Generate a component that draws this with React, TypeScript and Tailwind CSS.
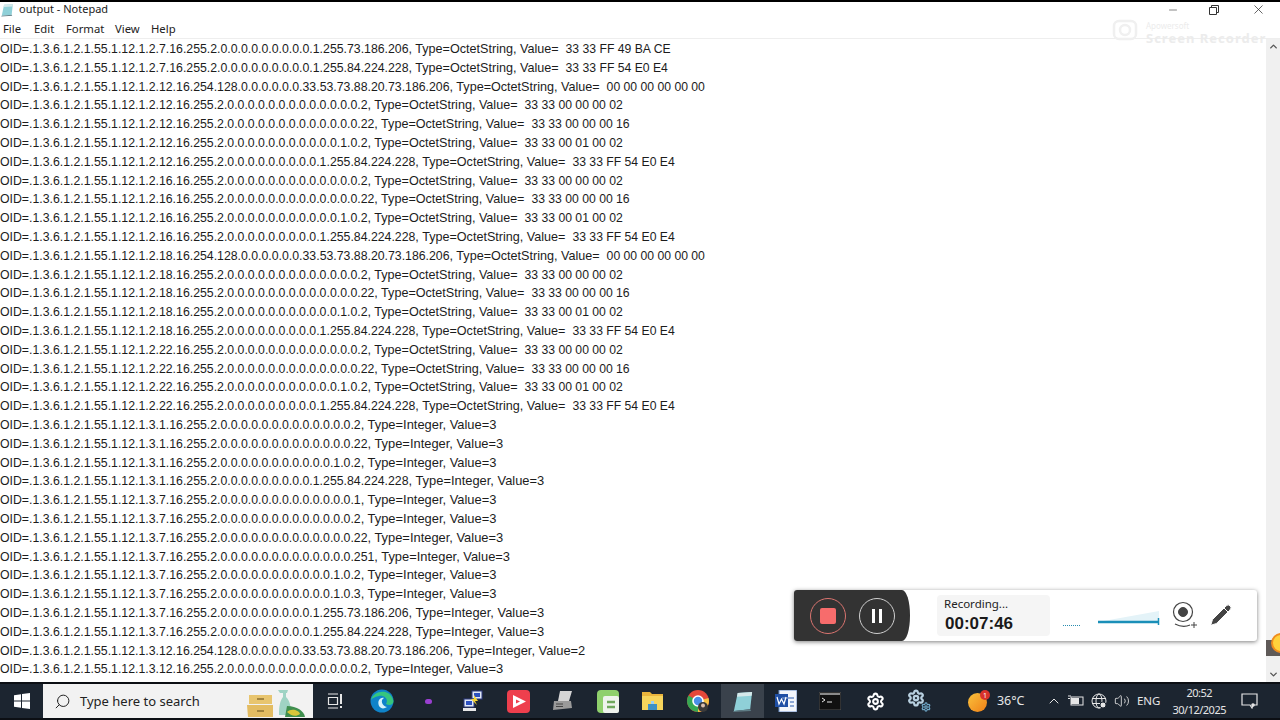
import type { ReactNode } from 'react'
import { ChevronDown, ChevronUp, Minus, Pencil, Search, Settings, Volume2, X } from 'lucide-react'

const prefix = 'OID=.1.3.6.1.2.1.55.1.12.1.'
const zeros = (n: number) => Array(n).fill('0').join('.')

const allNodes2 = `16.255.2.${zeros(13)}.2`
const allNodes22 = `16.255.2.${zeros(13)}.22`
const dhcp = `16.255.2.${zeros(11)}.1.0.2`
const sol84 = `16.255.2.${zeros(9)}.1.255.84.224.228`
const sol73 = `16.255.2.${zeros(9)}.1.255.73.186.206`
const linkLocal = '16.254.128.0.0.0.0.0.0.33.53.73.88.20.73.186.206'

type Line = { oid: string; type: string; value: string }

const oct = (id: string, value: string): Line => ({ oid: `${prefix}${id}`, type: ', Type=OctetString, Value=  ', value })
const int = (id: string, value = 3): Line => ({ oid: `${prefix}${id}`, type: ', Type=Integer, Value=', value: String(value) })

function ifaceRows(n: string, withLink: boolean) {
  const rows = [
    oct(`2.${n}.${allNodes2}`, '33 33 00 00 00 02'),
    oct(`2.${n}.${allNodes22}`, '33 33 00 00 00 16'),
    oct(`2.${n}.${dhcp}`, '33 33 00 01 00 02'),
    oct(`2.${n}.${sol84}`, '33 33 FF 54 E0 E4'),
  ]
  return withLink ? [oct(`2.${n}.${linkLocal}`, '00 00 00 00 00 00'), ...rows] : rows
}

const lines = [
  oct(`2.7.${sol73}`, '33 33 FF 49 BA CE'),
  oct(`2.7.${sol84}`, '33 33 FF 54 E0 E4'),
  ...ifaceRows('12', true),
  ...ifaceRows('16', false),
  ...ifaceRows('18', true),
  ...ifaceRows('22', false),
  int(`3.1.${allNodes2}`),
  int(`3.1.${allNodes22}`),
  int(`3.1.${dhcp}`),
  int(`3.1.${sol84}`),
  int(`3.7.16.255.2.${zeros(13)}.1`),
  int(`3.7.${allNodes2}`),
  int(`3.7.${allNodes22}`),
  int(`3.7.16.255.2.${zeros(13)}.251`),
  int(`3.7.${dhcp}`),
  int(`3.7.16.255.2.${zeros(11)}.1.0.3`),
  int(`3.7.${sol73}`),
  int(`3.7.${sol84}`),
  int(`3.12.${linkLocal}`, 2),
  int(`3.12.${allNodes2}`),
]

function NotepadIcon({ size = 16 }: { size?: number }) {
  return (
    <svg width={size} height={size} viewBox="0 0 24 24">
      <path d="M7 3 L22 2 L20 20 L3 22 Z" fill="#8fd0d8" />
      <path d="M7 3 L22 2 L21.6 6 L6.2 7 Z" fill="#d5e8ea" />
      <path d="M20 20 L3 22 L2 23 L21 22 Z" fill="#5f7d86" />
    </svg>
  )
}

function TitleBar() {
  return (
    <div className="flex h-[15px] items-center bg-white text-[11px] text-[#1a1a1a]">
      <div className="w-[19px]">
        <NotepadIcon size={14} />
      </div>
      <span>output - Notepad</span>
      <div className="ml-auto flex items-center text-[#333]">
        <Minus size={12} strokeWidth={1.2} className="mr-[29px]" />
        <svg width="12" height="12" viewBox="0 0 12 12" className="mr-[31px]" fill="none" stroke="#333">
          <path d="M1.5 3.5 H8.5 V10.5 H1.5 Z M3.5 3.5 V1.5 H10.5 V8.5 H8.5" />
        </svg>
        <X size={15} strokeWidth={1.2} className="mr-[14px]" />
      </div>
    </div>
  )
}

function MenuBar() {
  return (
    <div className="flex h-[22px] items-center border-b border-[#eeeeee] bg-white pl-[3px] pt-[3px] text-[11.3px] text-[#222]">
      <span className="w-[31px]">File</span>
      <span className="w-[32px]">Edit</span>
      <span className="w-[49px]">Format</span>
      <span className="w-[36px]">View</span>
      <span>Help</span>
    </div>
  )
}

function Watermark() {
  return (
    <div className="pointer-events-none absolute left-[1112px] top-[19px] flex items-center gap-[8px]">
      <svg width="26" height="28" viewBox="0 0 26 28" fill="none" stroke="#f0f0f0" strokeWidth="2.5">
        <rect x="2" y="2" width="22" height="18" rx="5" />
        <circle cx="13" cy="11" r="5" />
      </svg>
      <div className="flex flex-col text-[#ececec]">
        <span className="text-[8px] leading-[10px]">Apowersoft</span>
        <span className="text-[13px] font-bold leading-[14px] tracking-[1px]">Screen Recorder</span>
      </div>
    </div>
  )
}

function Scrollbar() {
  return (
    <div className="relative flex w-[14px] flex-col items-center justify-between bg-[#f0f0f0] py-[2px] text-[#555]">
      <ChevronUp size={11} strokeWidth={3} />
      <ChevronDown size={11} strokeWidth={3} />
      <div className="absolute left-0 top-[601px] h-[16px] w-full bg-[#5f5a58]" />
      <div className="absolute left-[5px] top-[594px] h-[20px] w-[20px] rounded-full border-2 border-[#f08c1e] bg-[#ffd23c]" />
    </div>
  )
}

function Recorder() {
  return (
    <div className="absolute left-[794px] top-[590px] flex h-[51px] w-[463px] rounded-[3px] bg-white shadow-[0_1px_4px_rgba(0,0,0,0.5)]">
      <div className="flex w-[116px] items-center gap-[13px] rounded-l-[3px] rounded-r-[8px_25px] bg-[#333333] pl-[16px]">
        <div className="flex h-[36px] w-[36px] items-center justify-center rounded-full border border-[#d9746f]">
          <div className="h-[16px] w-[16px] rounded-[2px] bg-[#f76c6c]" />
        </div>
        <div className="flex h-[36px] w-[36px] items-center justify-center gap-[4px] rounded-full border border-[#cfcfcf]">
          <div className="h-[14px] w-[3px] bg-white" />
          <div className="h-[14px] w-[3px] bg-white" />
        </div>
      </div>
      <div className="ml-[27px] mt-[5px] h-[41px] w-[113px] rounded-[4px] bg-[#f5f5f5] pl-[7px]">
        <div className="text-[11.5px] leading-[18px] text-[#222]">Recording...</div>
        <div className="pl-[1px] font-['Liberation_Sans',sans-serif] text-[17px] font-bold leading-[21px] text-[#1a1a1a]">00:07:46</div>
      </div>
      <div className="ml-[13px] mt-[35px] h-0 w-[17px] border-t border-dotted border-[#2a8db0]" />
      <svg width="64" height="20" viewBox="0 0 64 20" className="ml-[17px] mt-[20px]">
        <path d="M1 12 L62 1 L62 12 Z" fill="#e4f3f8" />
        <path d="M1 12 H61" stroke="#1a8fb8" strokeWidth="2.5" />
        <path d="M61.5 8 V15" stroke="#1a8fb8" strokeWidth="1.5" />
      </svg>
      <svg width="26" height="28" viewBox="0 0 26 28" className="ml-[11px] mt-[11px]" fill="none" stroke="#444">
        <circle cx="11" cy="11" r="9.5" strokeWidth="1.2" />
        <circle cx="11" cy="11" r="4.5" fill="#444" />
        <path d="M3 23 Q11 27 18 24" strokeWidth="1.2" />
        <path d="M19 24 H25 M22 21 V27" strokeWidth="1" />
      </svg>
      <Pencil size={24} fill="#444" stroke="#fff" strokeWidth={1} className="ml-[11px] mt-[13px]" />
    </div>
  )
}

function EdgeIcon() {
  return (
    <svg width="24" height="24" viewBox="0 0 24 24">
      <circle cx="12" cy="12" r="11.5" fill="#0f83c9" />
      <path d="M1 11 C3 2 20 -2 23.5 12 C23.5 16 19 17 16 15 C19 10 14 6 9 7 C5 8 2 9 1 11 Z" fill="#36c57d" />
      <path d="M9 17 C7 12 10 8 14 9 C10 11 12 17 17 18 C14 20 11 20 9 17 Z" fill="#d8f3fb" />
    </svg>
  )
}

function ChromeIcon() {
  return (
    <svg width="24" height="24" viewBox="0 0 24 24">
      <circle cx="12" cy="12" r="11" fill="#e5483a" />
      <path d="M12 12 L22.5 9 A11 11 0 0 1 12 23 Z" fill="#f6c445" />
      <path d="M12 12 L12 23 A11 11 0 0 1 2.5 6.5 Z" fill="#35a853" />
      <circle cx="12" cy="12" r="5" fill="#4a8fe8" stroke="#fff" strokeWidth="1.6" />
      <circle cx="17" cy="18" r="5" fill="#3a3a3a" />
      <circle cx="17" cy="16.5" r="2" fill="#d8c0b0" />
    </svg>
  )
}

function Gears() {
  return (
    <div className="relative h-[24px] w-[24px] text-[#b8d0e0]">
      <Settings size={18} strokeWidth={3} className="absolute left-0 top-0" />
      <Settings size={10} strokeWidth={3} className="absolute bottom-[1px] right-0 text-[#6fa7c7]" />
    </div>
  )
}

function TaskIcon({ width = 44, active, children }: { width?: number; active?: boolean; children: ReactNode }) {
  return (
    <div
      className={`flex h-full items-center justify-center ${active ? 'bg-[#3a424c]' : ''}`}
      style={{ width }}
    >
      {children}
    </div>
  )
}

function Taskbar() {
  return (
    <div className="flex h-[38px] items-stretch border-y-2 border-[#0c0f14] bg-[#1c2530]">
      <div className="flex w-[43px] items-center justify-center">
        <svg width="16" height="16" viewBox="0 0 16 16" fill="#fff">
          <path d="M0 2.2 L7 1.2 V7.5 H0 Z M8 1 L16 0 V7.5 H8 Z M0 8.5 H7 V14.8 L0 13.8 Z M8 8.5 H16 V16 L8 15 Z" />
        </svg>
      </div>
      <div className="flex w-[270px] items-center bg-[#f2f2f2] pl-[11px] text-[13px] text-[#222]">
        <Search size={17} strokeWidth={1.4} className="-scale-x-100" />
        <span className="ml-[9px] pt-[1px]">Type here to search</span>
        <svg width="66" height="34" viewBox="0 0 66 34" className="ml-[47px] shrink-0">
          <path d="M2 11 H25 V20 H2 Z" fill="#e8c56f" />
          <path d="M0 21 H26 V33 H1 Z" fill="#e3bc62" />
          <path d="M10 15 H17 M10 27 H17" stroke="#8b6f30" strokeWidth="1.5" />
          <path d="M31 6 H41 L40 9 H39 V13 C43 17 44 22 44 31 H32 C32 22 33 17 36 13 V9 H33 Z" fill="#9fd3c4" />
          <path d="M40 22 C50 22 57 27 58 33 H38 Z" fill="#3f8f4f" />
          <path d="M40 28 C44 24 52 26 53 30 C49 33 44 32 40 28 Z" fill="#d9c63a" />
        </svg>
      </div>

      <TaskIcon>
        <svg width="16" height="16" viewBox="0 0 16 16" fill="none" stroke="#e6e6e6" strokeWidth="1.2">
          <path d="M1 1 H11 M1 15 H11" />
          <path d="M1.5 4.5 H10.5 V11.5 H1.5 Z" />
          <path d="M14 1 V11 M14 13 V15" strokeWidth="2" />
        </svg>
      </TaskIcon>
      <TaskIcon width={50}><EdgeIcon /></TaskIcon>
      <TaskIcon width={42}><div className="h-[5px] w-[7px] rounded-full bg-[#9a3fd0]" /></TaskIcon>
      <TaskIcon width={48}>
        <svg width="24" height="24" viewBox="0 0 24 24">
          <rect x="11" y="2" width="10" height="8" fill="#dfe7f5" stroke="#2c3a80" />
          <rect x="13" y="4" width="6" height="4" fill="#2c50c0" />
          <rect x="3" y="10" width="10" height="8" fill="#dfe7f5" stroke="#2c3a80" />
          <rect x="5" y="12" width="6" height="4" fill="#2c50c0" />
          <path d="M13 6 L17 12 H14 L16 16 L10 10 H13 Z" fill="#f5d432" />
          <rect x="2" y="19" width="13" height="3" fill="#e8e8e8" />
        </svg>
      </TaskIcon>
      <TaskIcon width={42}>
        <svg width="23" height="23" viewBox="0 0 23 23">
          <rect width="23" height="23" rx="4" fill="#ee3f4d" />
          <path d="M6 5 L19 11.5 L6 18 Z M9 9.5 V13.5 L13 11.5 Z" fill="#fff" fillRule="evenodd" />
        </svg>
      </TaskIcon>
      <TaskIcon width={46}>
        <svg width="22" height="22" viewBox="0 0 22 22">
          <path d="M9 1 H21 L18 11 H7 Z" fill="#d5d5d5" />
          <path d="M3 11 H20 L21 18 L2 20 Z" fill="#9a9a9a" />
          <path d="M5 14 H12 M5 16.5 H12" stroke="#444" />
        </svg>
      </TaskIcon>
      <TaskIcon width={46}>
        <svg width="22" height="23" viewBox="0 0 22 23">
          <rect width="22" height="23" rx="4" fill="#8fd06c" />
          <rect x="6" y="6" width="16" height="17" rx="2" fill="#eef3ec" />
          <path d="M10 12 H18 M10 17 H18" stroke="#6fa85c" strokeWidth="2.5" />
        </svg>
      </TaskIcon>
      <TaskIcon width={44}>
        <svg width="22" height="20" viewBox="0 0 22 20">
          <path d="M0 1 H8 L10 3 H21 V6 H0 Z" fill="#e9b43c" />
          <rect y="5" width="21" height="14" fill="#f6d45c" />
          <rect x="6" y="13" width="9" height="6" fill="#3f8fc4" />
          <rect x="9" y="10" width="3" height="3" fill="#9fd0f0" />
        </svg>
      </TaskIcon>
      <TaskIcon width={46}><ChromeIcon /></TaskIcon>
      <TaskIcon width={43} active><NotepadIcon size={23} /></TaskIcon>
      <TaskIcon>
        <svg width="22" height="22" viewBox="0 0 22 22">
          <rect x="4" y="0" width="18" height="22" fill="#f3f6fb" stroke="#6d8fc7" />
          <rect x="0" y="4" width="13" height="13" fill="#1f4fa5" />
          <path d="M7 8 H19 M15 12 H19 M15 16 H19" stroke="#6d8fc7" strokeWidth="1.5" />
          <path d="M2 7 L4 14 L6.5 9 L9 14 L11 7" stroke="#fff" fill="none" strokeWidth="1.2" />
        </svg>
      </TaskIcon>
      <TaskIcon>
        <svg width="22" height="18" viewBox="0 0 22 18">
          <rect width="22" height="18" fill="#111" stroke="#555" />
          <rect x="1" y="1" width="20" height="2" fill="#8a8a8a" />
          <path d="M3 6 L6 8 L3 10 M8 10 H13" stroke="#e8e8e8" fill="none" />
        </svg>
      </TaskIcon>
      <TaskIcon width={46}><Settings size={19} strokeWidth={2.6} className="text-white" /></TaskIcon>
      <TaskIcon width={42}><Gears /></TaskIcon>

      <div className="ml-auto flex items-center text-[#e6e6e6]">
        <div className="relative h-[22px] w-[22px]">
          <div className="absolute bottom-0 left-0 h-[19px] w-[19px] rounded-full bg-gradient-to-br from-[#f9c23c] to-[#ee7f15]" />
          <div className="absolute right-0 top-0 flex h-[10px] w-[10px] items-center justify-center rounded-full bg-[#d8322b] text-[7px] leading-none text-white">1</div>
        </div>
        <span className="ml-[7px] w-[49px] text-[12.5px]">36°C</span>
        <ChevronUp size={16} strokeWidth={1.5} />
        <svg width="16" height="12" viewBox="0 0 16 12" className="ml-[6px]">
          <rect x="3" y="2" width="12" height="8" fill="none" stroke="#e6e6e6" />
          <rect x="3" y="3" width="8" height="6" fill="#e6e6e6" />
          <path d="M0 1 H3 M0 3.5 H2" stroke="#e6e6e6" />
        </svg>
        <svg width="16" height="16" viewBox="0 0 16 16" className="ml-[7px]" fill="none" stroke="#e6e6e6">
          <circle cx="8" cy="8" r="7" />
          <ellipse cx="8" cy="8" rx="3" ry="7" />
          <path d="M1 5.5 H15 M1 10.5 H15" />
          <circle cx="12" cy="12" r="3" fill="#e6e6e6" stroke="#1c2530" />
        </svg>
        <Volume2 size={16} strokeWidth={1.3} className="ml-[7px]" />
        <span className="ml-[7px] text-[11.5px]">ENG</span>
        <div className="ml-[12px] flex flex-col items-center text-[11px] leading-[17px] tracking-[-0.5px]">
          <span>20:52</span>
          <span>30/12/2025</span>
        </div>
        <svg width="18" height="16" viewBox="0 0 18 16" className="ml-[15px] mr-[21px]" fill="none" stroke="#e6e6e6" strokeWidth="1.2">
          <path d="M1 1 H16 V12 H12 L11 15 L9 12 H1 Z" />
          <circle cx="12" cy="12" r="1.2" fill="#e6e6e6" />
        </svg>
      </div>
    </div>
  )
}

export default function App() {
  return (
    <div className="relative flex h-[720px] w-[1280px] flex-col overflow-hidden bg-white font-['Noto_Sans',sans-serif]">
      <div className="h-[2px] bg-black" />
      <TitleBar />
      <MenuBar />
      <Watermark />
      <div className="flex min-h-0 flex-1">
        <div className="flex-1 overflow-hidden whitespace-pre pt-[1px] font-['Liberation_Sans',sans-serif] text-[12.3px] leading-[18.8px] text-[#1c1c1c]">
          {lines.map((line, i) => (
            <div key={i}>
              {line.oid}
              {line.value.length > 1 ? (
                <>
                  <span className="text-[12.6px]">{line.type}</span>
                  <span className="text-[12.2px]">{line.value}</span>
                </>
              ) : (
                <span className="text-[12.9px]">
                  {line.type}
                  {line.value}
                </span>
              )}
            </div>
          ))}
        </div>
        <Scrollbar />
      </div>
      <Recorder />
      <Taskbar />
    </div>
  )
}
